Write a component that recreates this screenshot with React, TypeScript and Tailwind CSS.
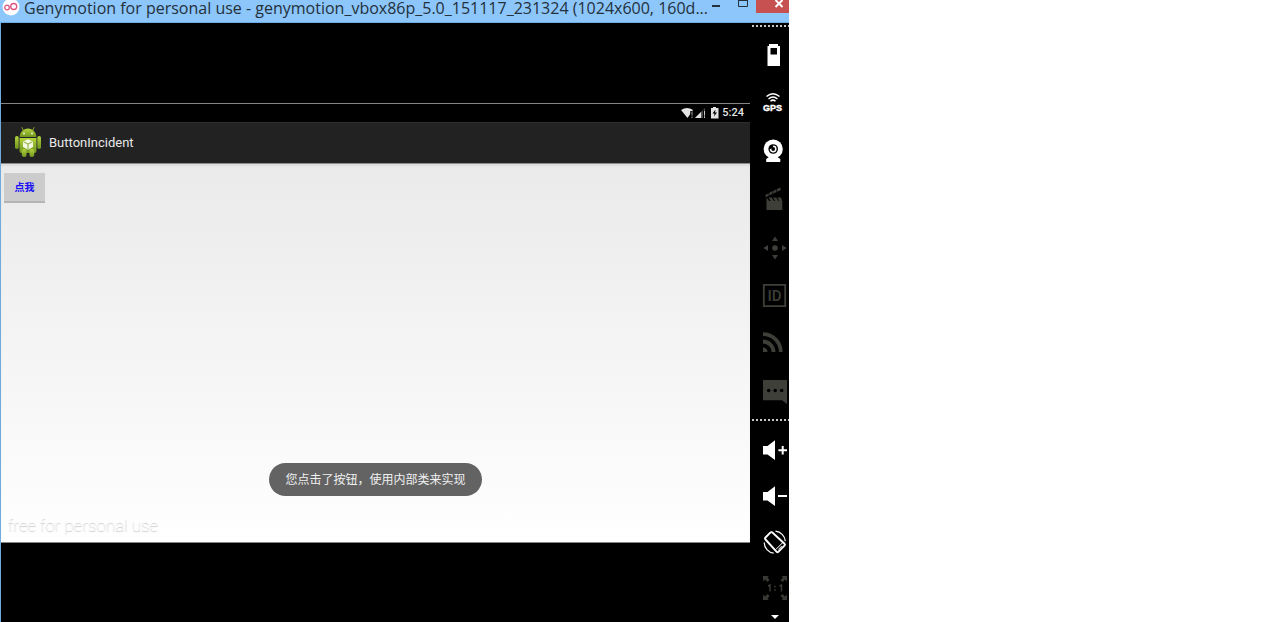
import { useState } from "react";
import type { ReactNode } from "react";

const cjk = "font-[Roboto,'Noto_Sans_CJK_SC',sans-serif]";

function Glyph({ children }: { children: ReactNode }) {
  return (
    <svg viewBox="0 0 24 24" className="block size-6 overflow-visible" fill="currentColor" aria-hidden="true">
      {children}
    </svg>
  );
}

const sensors: { label: string; on: boolean; icon: ReactNode }[] = [
  {
    label: "Battery",
    on: true,
    icon: <path fillRule="evenodd" d="M6 1h9v2h2v20H4.500V3H6zM7.500 5v6.500h6.500V5z" />,
  },
  {
    label: "GPS",
    on: true,
    icon: (
      <>
        <g fill="none" stroke="currentColor" strokeWidth="1.500">
          <path d="M3.500 5.500q6.500-5.500 13 0M5.500 8q4.500-4 9 0M7.500 10.300q2.500-2.300 5 0" />
        </g>
        <text x="0" y="20" fontSize="9" fontWeight="900" stroke="currentColor" strokeWidth="0.400" fontFamily="Liberation Sans, sans-serif">
          GPS
        </text>
      </>
    ),
  },
  {
    label: "Camera",
    on: true,
    icon: (
      <>
        <circle cx="10.200" cy="10" r="9.600" />
        <path d="M6 18h8.500l2.800 2V23H3.200v-3z" />
        <circle cx="10.200" cy="10" r="4.800" fill="#000" />
        <path d="M10.200 6.600a3.400 3.400 0 1 1-3.400 3.400q3.400 0 3.400-3.400z" />
        <circle cx="10.200" cy="10" r="1.900" fill="#000" />
      </>
    ),
  },
  {
    label: "Capture",
    on: false,
    icon: (
      <>
        <path d="M3.500 14h15.800V23H3.500zM3.500 10.500l3 4h-3zM5.500 10.500h3.200l2.500 4H8zM10 10.500h3.200l2.500 4h-3.200zM14.500 10.500h3.500l1.300 4h-2.800z" />
        <path d="M2.300 8l3.400-1.800v2.600L2.800 10.200zM6.300 5.700l3.300-1.600v2.700L6.300 8.500zM10.200 3.900l3.200-1.600v2.700l-3.200 1.700zM14 2.100l3.200-1.600.8 2.400-4 1.900z" />
      </>
    ),
  },
  {
    label: "Remote control",
    on: false,
    icon: (
      <>
        <circle cx="12" cy="13" r="2.800" />
        <path d="M12 1.500l3 4.500H9zM12 24.500l-3-4.500h6zM.3 13L5 10v6zM23.700 13L19 10v6z" />
      </>
    ),
  },
  {
    label: "Identifiers",
    on: false,
    icon: (
      <>
        <path d="M.8 1.800h21.400v21.400H.8z" fill="none" stroke="currentColor" strokeWidth="1.800" />
        <text x="4.500" y="18" fontSize="15" fontWeight="500" fontFamily="Roboto, sans-serif">
          ID
        </text>
      </>
    ),
  },
  {
    label: "Network",
    on: false,
    icon: (
      <>
        <path d="M0 21v-4.500a4.500 4.500 0 0 1 4.500 4.500z" />
        <path d="M0 10.500a10.500 10.500 0 0 1 10.500 10.500M0 3.200a17.800 17.800 0 0 1 17.800 17.800" fill="none" stroke="currentColor" strokeWidth="3.800" />
      </>
    ),
  },
  {
    label: "Phone",
    on: false,
    icon: (
      <>
        <path d="M0 1h24v24l-5-3.700H0z" />
        <g fill="#000">
          <circle cx="5.700" cy="11.500" r="1.800" />
          <circle cx="12.200" cy="11.500" r="1.800" />
          <circle cx="18.700" cy="11.500" r="1.800" />
        </g>
      </>
    ),
  },
];

const controls: { label: string; on: boolean; icon: ReactNode }[] = [
  {
    label: "Volume up",
    on: true,
    icon: <path d="M0 8h4.500L12 2.300v19.700L4.500 16.500H0zM18.700 8h2v3.300H24v2h-3.300v3.300h-2v-3.300h-3.300v-2h3.300z" />,
  },
  {
    label: "Volume down",
    on: true,
    icon: <path d="M0 8h4.500L12 2.300v19.700L4.500 16.500H0zM15 11h9v2h-9z" />,
  },
  {
    label: "Rotate",
    on: true,
    icon: (
      <g fill="none" stroke="currentColor">
        <path d="M9.200 2.300Q8 1.800 7 2.800L2.500 7.500q-1 1 0 2l11 12.200q1 1 2 0l6-6q1-1 0-2z" strokeWidth="1.900" />
        <path d="M12.800 19.500l7-7" strokeWidth="1" />
        <path d="M15.300 19.500l3.500-3.500" strokeWidth="1" />
        <path d="M12.500 1.200a11 11 0 0 1 9.800 10M1.200 12.500a11 11 0 0 0 9.500 10.700" strokeWidth="1.200" />
      </g>
    ),
  },
  {
    label: "Pixel perfect",
    on: false,
    icon: (
      <g opacity="0.900">
        <path d="M0 0h6L4.500 1.500 6.500 4 4.500 6 2 3.500 0 5.500zM24 0v5.500L22 3.500 19.500 6 17.500 4 20 1.500 18.500 0zM0 24v-5.500l2 2L4.500 18l2 2-2 2.500L6 24zM24 24h-5.500l1.500-1.500-2.500-2.500 2-2 2.500 2.500 2-2z" />
        <path d="M5 10L7 9v6.500M11 10.500h1.700M11 14h1.700M16.500 10l2-1v6.500" fill="none" stroke="currentColor" strokeWidth="1.500" />
      </g>
    ),
  },
];

function TitleBar() {
  return (
    <header className="flex h-[23px] items-start border-b border-[#6faae0] bg-[#8cc6fa] text-[#24303c]">
      <svg viewBox="0 0 18 22" className="ml-[2px] h-[22px] w-[18px] shrink-0" aria-hidden="true">
        <circle cx="9" cy="7" r="8.500" fill="#fff" />
        <g fill="none" stroke="#e0527f" strokeWidth="1.300">
          <circle cx="5" cy="7.500" r="2.300" />
          <circle cx="11.700" cy="6.500" r="3" />
        </g>
      </svg>
      <h1 className="ml-1 min-w-0 flex-1 font-['Open_Sans',sans-serif] text-[16px] leading-4 whitespace-nowrap">
        Genymotion for personal use - genymotion_vbox86p_5.0_151117_231324 (1024x600, 160d...
      </h1>
      <button type="button" aria-label="Minimize" className="flex h-[13px] w-[22px] shrink-0 items-start pt-[5px] pl-1">
        <span className="h-[2px] w-2 bg-[#24303c]" />
      </button>
      <button type="button" aria-label="Maximize" className="h-[13px] w-[26px] shrink-0">
        <svg viewBox="0 0 26 13" className="block h-[13px] w-[26px]" aria-hidden="true">
          <path d="M8.500 0v6.500h9V0M8 .5h10" fill="none" stroke="#24303c" />
        </svg>
      </button>
      <button type="button" aria-label="Close" className="h-[13px] w-[33px] shrink-0 bg-[#c75050]">
        <svg viewBox="0 0 33 13" className="block h-[13px] w-[33px]" aria-hidden="true">
          <path d="M19.500 0l7 7M26.500 0l-7 7" fill="none" stroke="#fff" strokeWidth="2" />
        </svg>
      </button>
    </header>
  );
}

function StatusBar() {
  return (
    <div className="flex h-[18px] items-center justify-end bg-black pr-1.5 text-[#e4e4e4]">
      <svg viewBox="0 0 40 12" className="mr-px h-3 w-10" aria-hidden="true">
        <path d="M0 3Q6 -1 12 3L6.500 11z" fill="currentColor" />
        <path d="M10.500 4v7" stroke="#000" strokeWidth="2.500" />
        <path d="M11 4.500v4M11 9.500v1.500" stroke="#aaa" />
        <path d="M14 11L24 1v10z" fill="#555" />
        <path d="M14 11l6-6v6z" fill="currentColor" />
        <path d="M22.500 3v9" stroke="#000" strokeWidth="1.200" />
        <path d="M23.500 4v4.500M23.500 9.500V11" stroke="#ccc" />
        <path d="M30 1h2V0h3v1h2.500v10.500H30z" fill="currentColor" />
        <path d="M34.500 2.500l-3 4h2l-.5 3 3-4h-2z" fill="#000" />
      </svg>
      <span className="font-[Roboto,sans-serif] text-[11px] leading-[18px] font-medium">5:24</span>
    </div>
  );
}

function AndroidIcon() {
  return (
    <svg viewBox="0 0 26 32" className="h-8 w-[26px] shrink-0" aria-hidden="true">
      <defs>
        <linearGradient id="body" x1="0" y1="0" x2="0" y2="1">
          <stop offset="0" stopColor="#b3d33c" />
          <stop offset="1" stopColor="#6f9420" />
        </linearGradient>
      </defs>
      <path d="M8 3L7 .5M18 3l1-2.500" stroke="#7f9f30" strokeWidth="1" strokeLinecap="round" />
      <g fill="url(#body)">
        <path d="M4.500 10C5 5 8.500 1.500 13 1.500S21 5 21.500 10z" />
        <path d="M4.500 11h17v13q0 2-2 2h-13q-2 0-2-2z" />
        <rect x="0" y="9" width="3.700" height="13" rx="1.800" />
        <rect x="22.300" y="9" width="3.700" height="13" rx="1.800" />
        <rect x="6.800" y="22" width="4.700" height="8" rx="2" />
        <rect x="14.500" y="22" width="4.700" height="8" rx="2" />
      </g>
      <g fill="#f4f8df">
        <circle cx="9" cy="6.500" r="0.900" />
        <circle cx="17" cy="6.500" r="0.900" />
        <path d="M13 12.200l5 2.300V20L13 22.800 8 20v-5.500z" />
      </g>
      <path d="M8.500 14.800l4.500 2.200 4.500-2.200M13 17v5.500" fill="none" stroke="#86a838" />
    </svg>
  );
}

function ToolButton({ label, on, tall, children }: { label: string; on: boolean; tall: boolean; children: ReactNode }) {
  return (
    <button
      type="button"
      aria-label={label}
      className={`flex shrink-0 items-center ${tall ? "h-12" : "h-[46px]"} ${on ? "text-white" : "text-[#3f3f3a]"}`}
    >
      <Glyph>{children}</Glyph>
    </button>
  );
}

function Divider() {
  return <div className="ml-[2px] h-[2px] shrink-0 bg-[repeating-linear-gradient(90deg,#c8c8c8_0px,#c8c8c8_2px,transparent_2px,transparent_4px)]" />;
}

function Toolbar() {
  return (
    <aside className="flex w-[39px] shrink-0 flex-col overflow-hidden bg-black pt-[2px]">
      <Divider />
      <div className="mt-1 flex flex-col pl-[13px]">
        {sensors.map((s) => (
          <ToolButton key={s.label} label={s.label} on={s.on} tall>
            {s.icon}
          </ToolButton>
        ))}
      </div>
      <div className="pt-1">
        <Divider />
      </div>
      <div className="mt-[6px] flex flex-col pl-[13px]">
        {controls.map((c) => (
          <ToolButton key={c.label} label={c.label} on={c.on} tall={false}>
            {c.icon}
          </ToolButton>
        ))}
      </div>
      <button type="button" aria-label="More" className="flex justify-center pt-1 pl-[11px]">
        <svg viewBox="0 0 8 4" className="h-1 w-2" aria-hidden="true">
          <path d="M0 0h8L4 4z" fill="#fff" />
        </svg>
      </button>
    </aside>
  );
}

export default function App() {
  const [toast, setToast] = useState(true);
  return (
    <div className="min-h-screen bg-white">
      <div className="flex min-h-screen w-[789px] max-w-full flex-col">
        <TitleBar />
        <div className="flex flex-1 border-l border-[#6faae0] bg-black">
          <main className="flex min-w-0 flex-1 flex-col pt-20 pb-[79px]">
            <div className="flex flex-1 flex-col border-y border-[#858585]">
              <StatusBar />
              <div className="flex h-[41px] items-center border-t border-[#2e2e2e] bg-[#222222] pl-[14px]">
                <AndroidIcon />
                <h2 className="ml-2 font-[Roboto,sans-serif] text-[13px] text-[#e8e8e8]">ButtonIncident</h2>
              </div>
              <section className="flex flex-1 flex-col items-start border-t border-[#8c8c8c] bg-linear-to-b from-[#eaeaea] to-white shadow-[inset_0_2px_2px_rgba(0,0,0,0.06)]">
                <button
                  type="button"
                  onClick={() => setToast(true)}
                  className={`mt-[9px] ml-[3px] flex h-[30px] w-[41px] items-center justify-center border-b-2 border-[#b4b4b4] bg-[#cccccc] text-[10px] font-bold text-[#1a10f5] ${cjk}`}
                >
                  点我
                </button>
                <div className="mt-auto flex w-full justify-center">
                  {toast && (
                    <div
                      role="status"
                      className={`flex h-[33px] items-center rounded-full bg-[#636363] px-4 text-[12px] whitespace-nowrap text-[#f0f0f0] ${cjk}`}
                    >
                      您点击了按钮，使用内部类来实现
                    </div>
                  )}
                </div>
                <p className="mt-[19px] mb-[7px] ml-[7px] font-[Roboto,sans-serif] text-[17px] leading-5 font-thin text-white [text-shadow:0_1px_1px_#a8a8a8]">
                  free for personal use
                </p>
              </section>
            </div>
          </main>
          <Toolbar />
        </div>
      </div>
    </div>
  );
}
